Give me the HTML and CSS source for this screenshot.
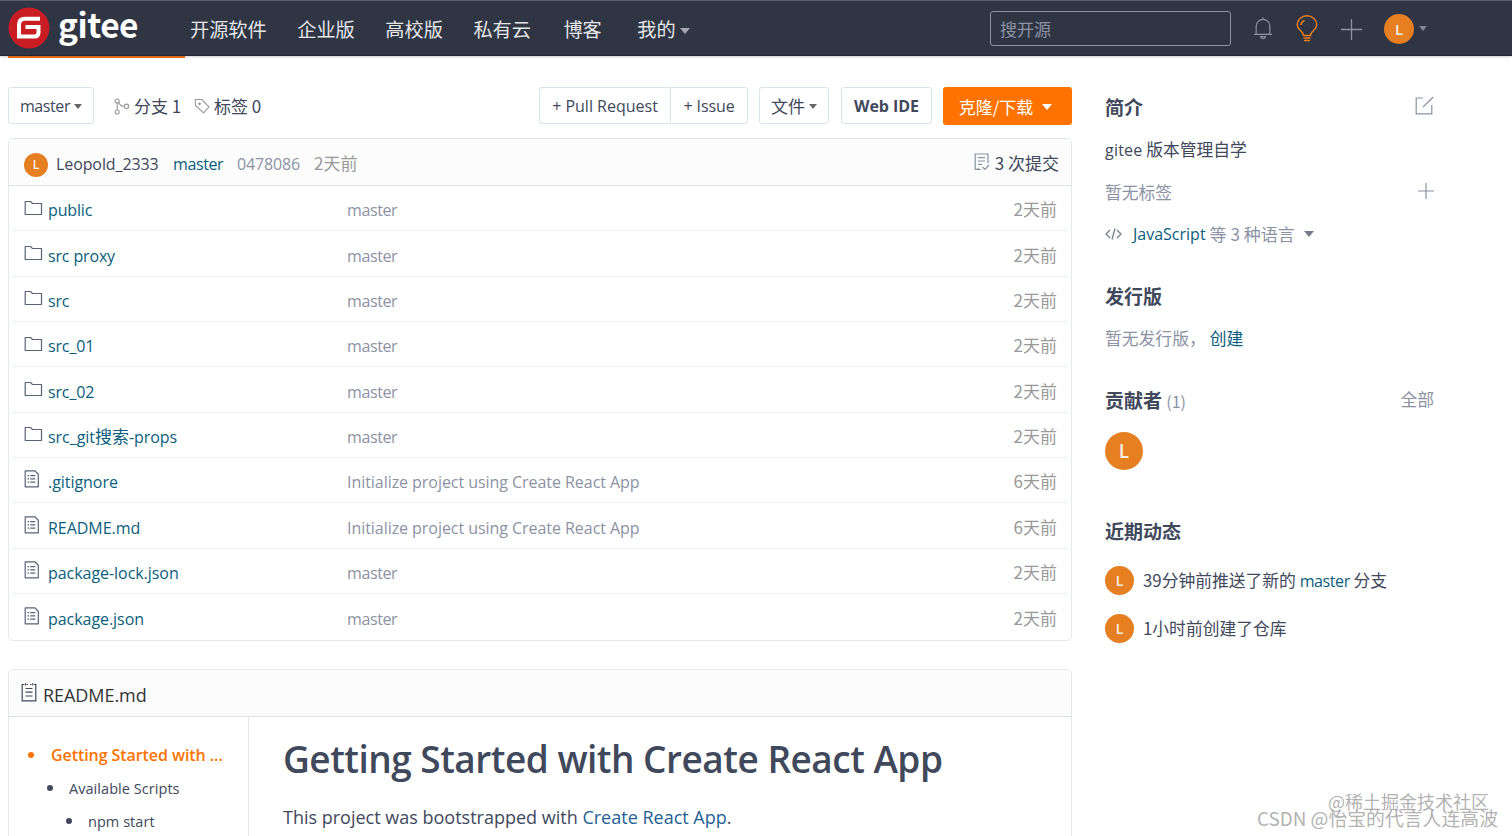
FILE: index.html
```html
<!DOCTYPE html>
<html lang="zh-CN">
<head>
<meta charset="utf-8">
<title>gitee</title>
<link rel="stylesheet" href="styles.css">
</head>
<body>
<svg class="sprite" width="0" height="0">
  <symbol id="folder" viewBox="0 0 19 17"><path d="M1.200 14.500V1.500h5.300l2 2h9v11z" fill="none" stroke="currentColor" stroke-width="1.200" stroke-linejoin="round"/></symbol>
  <symbol id="file" viewBox="0 0 16 18"><path d="M1.200.8h9.600l3.500 3.400v12.600H1.200z" fill="none" stroke="currentColor" stroke-width="1.200" stroke-linejoin="round"/><path d="M3.600 5.600h1.500m1.200 0h5M3.600 8.900h1.500m1.200 0h5M3.600 12.200h1.500m1.200 0h5" stroke="currentColor" stroke-width="1.300"/></symbol>
</svg>
<header class="nav">
  <a class="brand">
    <svg class="brand-mark" viewBox="0 0 42 42"><circle cx="21" cy="21" r="20.500" fill="#c71d23"/><path d="M32 11.700H17q-6 0-6 6V29.500H26.500q4 0 4-4V20H17.500" fill="none" stroke="#fff" stroke-width="4"/></svg>
    <span class="brand-name">gitee</span>
  </a>
  <nav class="menu"><a>开源软件</a><a>企业版</a><a>高校版</a><a>私有云</a><a class="blog">博客</a><a class="mine">我的<i class="caret"></i></a></nav>
  <div class="search">搜开源</div>
  <svg class="bell" viewBox="0 0 22 26" fill="none" stroke="#8c92a4" stroke-width="1.300"><path d="M1 19.500h20M3.500 19V10.500a7.500 7.500 0 0 1 15 0V19M11 1v2M8.300 22q.6 2.300 2.700 2.300t2.700-2.300z"/></svg>
  <svg class="bulb" viewBox="0 0 22 27" fill="none" stroke="#e67e22" stroke-width="1.500"><path d="M7.500 20.500C7.500 16 1.200 15 1.200 9.800a9.800 9 0 0 1 19.600 0C20.800 15 14.500 16 14.500 20.500zM7.500 23h7M8 25.600h6M5 10a5 5 0 0 1 3.500-4.500"/></svg>
  <svg class="plus" viewBox="0 0 21 21" stroke="#8c92a4" stroke-width="1.300"><path d="M10.500 0v21M0 10.500h21"/></svg>
  <span class="avatar a30">L</span><i class="caret dim"></i>
  <span class="tab-line"></span>
</header>
<main class="page">
  <section class="main">
    <div class="toolbar">
      <button class="btn b-branch">master<i class="caret"></i></button>
      <span class="stat"><svg width="16" height="17" viewBox="0 0 16 17" fill="none" stroke="#999" stroke-width="1.100"><circle cx="3.200" cy="3" r="2"/><circle cx="3.200" cy="14" r="2"/><circle cx="12.500" cy="8.300" r="2.200"/><path d="M3.200 5v7M4.600 4.600l1.600 2.300q.8 1.300 4 1.400"/></svg><em>分支 1</em></span>
      <span class="stat tag"><svg width="16" height="17" viewBox="0 0 16 17" fill="none" stroke="#999" stroke-width="1.100"><path d="M1.200 1.500h6.500L15 8.800l-5.500 6L1.500 7.500z" stroke-linejoin="round"/><circle cx="5.500" cy="5.800" r=".8" fill="#999"/></svg><em>标签 0</em></span>
      <div class="group"><button class="btn b-pr">+ Pull Request</button><button class="btn b-issue">+ Issue</button></div>
      <button class="btn b-file"><em>文件</em><i class="caret"></i></button>
      <button class="btn b-ide">Web IDE</button>
      <button class="btn b-clone"><em>克隆/下载</em><i class="caret"></i></button>
    </div>
    <div class="box files">
      <div class="box-head commit">
        <span class="avatar a24">L</span><span class="author">Leopold_2333</span><a class="link">master</a><span class="hash">0478086</span><span class="cjk ago">2天前</span>
        <svg class="log" width="16" height="18" viewBox="0 0 16 18" fill="none" stroke="#8c92a4" stroke-width="1.200"><path d="M14 10V1H1.200v15.500H7M4 4.600h7M4 8h7M4 11.400h4M3 16.500l1.500-1.500M8.500 14l2.500 2.500 4-4.500"/></svg><span class="cjk count">3 次提交</span>
      </div>
      <div class="row"><svg class="ic"><use href="#folder"/></svg><a>public</a><span>master</span><time>2天前</time></div>
      <div class="row"><svg class="ic"><use href="#folder"/></svg><a>src proxy</a><span>master</span><time>2天前</time></div>
      <div class="row"><svg class="ic"><use href="#folder"/></svg><a>src</a><span>master</span><time>2天前</time></div>
      <div class="row"><svg class="ic"><use href="#folder"/></svg><a>src_01</a><span>master</span><time>2天前</time></div>
      <div class="row"><svg class="ic"><use href="#folder"/></svg><a>src_02</a><span>master</span><time>2天前</time></div>
      <div class="row"><svg class="ic"><use href="#folder"/></svg><a class="wide">src_git<b>搜索</b>-props</a><span>master</span><time>2天前</time></div>
      <div class="row"><svg class="ic f"><use href="#file"/></svg><a class="wide">.gitignore</a><span class="wide">Initialize project using Create React App</span><time>6天前</time></div>
      <div class="row"><svg class="ic f"><use href="#file"/></svg><a class="wide">README.md</a><span class="wide">Initialize project using Create React App</span><time>6天前</time></div>
      <div class="row"><svg class="ic f"><use href="#file"/></svg><a class="wide">package-lock.json</a><span>master</span><time>2天前</time></div>
      <div class="row"><svg class="ic f"><use href="#file"/></svg><a class="wide">package.json</a><span>master</span><time>2天前</time></div>
    </div>
    <div class="box readme">
      <div class="box-head title"><svg width="16" height="19" viewBox="0 0 16 19" fill="none" stroke="#40485b" stroke-width="1.200"><path d="M3 1.500H1.200v16.300h13.600V1.500H13M5.500 1.500h1.500m2 0h1.500M4.300 .3v2.200m7.400-2.200v2.200M4.500 5.500h7M4.500 9.200h7M4.500 13h7"/></svg><span>README.md</span></div>
      <div class="readme-body">
        <ul class="toc"><li class="l1">Getting Started with ...</li><li class="l2">Available Scripts</li><li class="l3">npm start</li></ul>
        <article><h1>Getting Started with Create React App</h1><p>This project was bootstrapped with <a>Create React App</a>.</p></article>
      </div>
    </div>
  </section>
  <aside class="side">
    <div class="line intro"><h2>简介</h2><svg width="19" height="19" viewBox="0 0 19 19" fill="none" stroke="#8c92a4" stroke-width="1.200"><path d="M8 2H1.200v15.800h15.600V9M8 11L18.300 1"/></svg></div>
    <p class="desc"><span>gitee</span> 版本管理自学</p>
    <div class="line tags"><span>暂无标签</span><svg width="16" height="16" viewBox="0 0 16 16" stroke="#8c92a4" stroke-width="1.200"><path d="M8 0v16M0 8h16"/></svg></div>
    <p class="lang"><svg width="17" height="12" viewBox="0 0 17 12" fill="none" stroke="#777d8d" stroke-width="1.300"><path d="M5 2L1 6l4 4M12 2l4 4-4 4M10 .5L7 11.500"/></svg><a>JavaScript</a><span>等 3 种语言</span><i class="caret"></i></p>
    <h2 class="h-rel">发行版</h2>
    <p class="rel">暂无发行版，<a>创建</a></p>
    <div class="line contrib"><h2>贡献者 <small>(1)</small></h2><span>全部</span></div>
    <span class="avatar a38">L</span>
    <h2 class="h-act">近期动态</h2>
    <p class="act"><span class="avatar a29">L</span><span>39分钟前推送了新的 <a>master</a> 分支</span></p>
    <p class="act"><span class="avatar a29">L</span><span>1小时前创建了仓库</span></p>
  </aside>
</main>
<div class="mark m1">@稀土掘金技术社区</div>
<div class="mark m2">CSDN @怡宝的代言人连高波</div>
</body>
</html>
```
FILE: styles.css
```css
* { box-sizing: border-box; }
body { margin: 0; height: 836px; overflow: hidden; position: relative; background: #fff; color: #40485b; font: 16px/24px "Open Sans", "Noto Sans CJK SC", sans-serif; letter-spacing: -.4px; }
h1, h2, p, ul { margin: 0; padding: 0; }
em, i { font-style: normal; }
svg { flex: none; }
.sprite { position: absolute; }
.caret { flex: none; display: inline-block; border: 4.500px solid transparent; border-top: 5px solid currentColor; border-bottom: 0; }

.nav { position: relative; display: flex; align-items: center; height: 56px; background: #2f3543; border-top: 1px solid #575f6b; border-bottom: 1px solid #202634; box-shadow: 0 1px 2px #0003; }
.brand { display: flex; width: 182px; padding-left: 8px; align-items: center; }
.brand-mark { width: 42px; height: 42px; }
.brand-name { margin: -9px 0 0 8px; color: #fff; font: 700 33.500px/40px "Noto Sans CJK SC", sans-serif; letter-spacing: -.5px; }
.menu { display: flex; width: 808px; padding: 2px 0 0 8px; gap: 30.500px; color: #e3e5e9; font: 19.200px/28px "Noto Sans CJK SC", sans-serif; letter-spacing: 0; }
.blog { margin-left: 2px; }
.mine { display: flex; align-items: center; margin-left: 5px; color: #fff; }
.mine .caret { margin: 3px 0 0 4px; color: #a5a8b2; border-width: 6px 5px 0; }
.search { width: 241px; height: 35px; padding: 4px 9px; border: 1px solid #8c92a4; border-radius: 3px; color: #8c92a4; font: 17px/25px "Noto Sans CJK SC", sans-serif; letter-spacing: 0; }
.bell { width: 20px; height: 25px; margin-left: 22px; }
.bulb { width: 22px; height: 27px; margin-left: 23px; }
.plus { width: 21px; height: 21px; margin: 2px 0 0 23px; }
.avatar { flex: none; display: flex; align-items: center; justify-content: center; border-radius: 50%; background: #e67e22; color: #f8eee4; font-family: "Open Sans", sans-serif; font-weight: 600; letter-spacing: 0; }
.a30 { width: 30px; height: 30px; margin: 1px 5px 0 22px; font-size: 15px; }
.dim { color: #7d8596; }
.tab-line { position: absolute; left: 8px; top: 55px; width: 177px; height: 2px; background: #e36a15; }

.page { display: flex; padding: 31px 0 0 8px; gap: 33px; }
.main { width: 1064px; }
.toolbar { display: flex; height: 38px; }
.btn { display: flex; align-items: center; justify-content: center; height: 37px; padding: 0; border: 1px solid #dce3e8; border-radius: 3px; background: #fff; color: #40485b; font: inherit; letter-spacing: -.4px; padding-top: 1px; }
.btn em, .stat em { font: 17px/24px "Noto Sans CJK SC", sans-serif; letter-spacing: 0; }
.b-branch { width: 86px; gap: 4px; }
.b-branch .caret, .b-file .caret { color: #666; }
.stat { display: flex; align-items: center; gap: 4px; width: 68px; margin-left: 20px; }
.stat.tag { margin-left: 12px; width: 72px; }
.group { display: flex; margin-left: auto; }
.b-pr { width: 131px; border-radius: 3px 0 0 3px; letter-spacing: 0; }
.b-issue { width: 78px; border-radius: 0 3px 3px 0; letter-spacing: -.1px; }
.group .b-pr { border-right: 0; }
.group { margin-right: 11px; }
.b-file { width: 70px; gap: 4px; margin-right: 12px; }
.b-ide { width: 91px; margin-right: 11px; font-weight: 700; letter-spacing: -.05px; }
.b-clone { width: 129px; height: 38px; padding-right: 4px; border: 0; background: #fe7300; color: #fff; gap: 9px; }
.b-clone .caret { border-width: 6px 5.500px 0; }

.box { border: 1px solid #e3e9ed; border-radius: 5px; overflow: hidden; }
.files { margin-top: 13px; height: 503px; }
.box-head { display: flex; align-items: center; height: 47px; background: #fcfcfc; border-bottom: 1px solid #dfe3e8; }
.commit { padding: 3px 12px 0 15px; }
.a24 { width: 24px; height: 24px; margin: 3px 8px 0 0; font-size: 12px; }
.author { width: 117px; letter-spacing: -.1px; }
a { color: #0a5e7d; }
.nav a { color: inherit; }
.link { width: 64px; }
.hash { width: 77px; color: #8c92a4; letter-spacing: -.15px; }
.cjk { font: 17px/24px "Noto Sans CJK SC", sans-serif; letter-spacing: 0; }
.ago, time { color: #999; }
.ago, .count { margin-top: -1px; }
.log { margin: -3px 5px 0 auto; }
.row { display: flex; align-items: center; height: 45.350px; margin: 0 3px; padding: 4px 11px 0; border-bottom: 1px solid #eef0f3; }
.row:last-child { border: 0; }
.ic { width: 19px; height: 17px; margin: -4px 5px 0 1px; color: #5b6275; }
.ic.f { width: 16px; height: 18px; margin: -6px 8px 0 1px; }
.row a { width: 299px; letter-spacing: -.15px; }
.row b { font: 17px/20px "Noto Sans CJK SC", sans-serif; letter-spacing: 0; }
.row span { color: #8c92a4; }
.row .wide { letter-spacing: -.05px; }
.row time { margin: -2px 0 0 auto; font: 17px/24px "Noto Sans CJK SC", sans-serif; letter-spacing: 0; }

.readme { margin-top: 28px; height: 200px; }
.title { padding: 4px 0 0 12px; gap: 6px; color: #333; font-size: 18px; letter-spacing: -.05px; }
.title svg { margin-top: -5px; }
.readme-body { display: flex; height: 153px; }
.toc { width: 240px; padding-top: 22px; border-right: 1px solid #e3e7eb; list-style: none; font-size: 14.500px; line-height: 33px; letter-spacing: .05px; }
.toc li { display: flex; align-items: center; height: 33px; }
.toc li::before { content: ""; width: 6px; height: 6px; margin: -2px 17px 0 19px; border-radius: 50%; background: currentColor; }
.toc .l1 { color: #fe7300; font-size: 16px; font-weight: 600; letter-spacing: -.07px; }
.toc .l2::before { margin-left: 38px; margin-right: 16px; }
.toc .l3::before { margin-left: 57px; margin-right: 16px; }
article { padding: 16px 0 0 34px; font-size: 18px; letter-spacing: 0; }
article h1 { font-size: 37px; line-height: 52px; font-weight: 600; letter-spacing: -.5px; white-space: nowrap; }
article p { margin-top: 19px; line-height: 26px; }
article a { color: #1f5f93; }

.side { width: 329px; font-family: "Noto Sans CJK SC", sans-serif; font-size: 16.800px; letter-spacing: 0; }
.side h2 { font-size: 19px; line-height: 28px; font-weight: 700; color: #40485b; }
.side a { letter-spacing: -.4px; }
.line { display: flex; justify-content: space-between; align-items: center; }
.intro { margin-top: 6px; }
.intro svg { margin-top: -4px; }
.desc { margin-top: 16px; }
.desc span, .lang a, .act a { font-family: "Open Sans", sans-serif; font-size: 16px; }
.desc span { letter-spacing: .2px; }
.tags { margin-top: 18px; color: #8c92a4; }
.tags svg { margin-top: -2px; }
.lang { display: flex; align-items: center; margin-top: 18px; color: #8c92a4; }
.side .lang a { margin: 0 4px 0 11px; letter-spacing: 0; }
.lang span { font-size: 17px; }
.lang .caret { margin-left: 9px; border-width: 6px 5.500px 0; color: #777d8d; }
.side .h-rel { margin-top: 36px; }
.rel { margin-top: 16px; color: #8c92a4; }
.rel a { margin-left: 4px; }
.side .rel a { letter-spacing: 0; }
.contrib { margin-top: 36px; color: #8c92a4; }
.contrib > span { margin-top: -3px; }
.contrib small { font: 16px "Noto Sans CJK SC", sans-serif; color: #8c92a4; }
.a38 { width: 38px; height: 38px; margin-top: 18px; font-size: 19px; }
.side .h-act { margin-top: 47px; }
.act { display: flex; align-items: center; gap: 9px; height: 29px; margin-top: 21px; }
.act > span:last-child { margin-top: -1px; }
.act + .act { margin-top: 19px; }
.a29 { width: 29px; height: 29px; font-size: 14px; }

.mark { position: absolute; color: #8a8a8aaa; white-space: nowrap; font: 18px/24px "Noto Sans CJK SC", sans-serif; letter-spacing: 0; }
.m1 { right: 23px; top: 789px; }
.m2 { right: 14px; top: 806px; font-size: 18.850px; }
```
